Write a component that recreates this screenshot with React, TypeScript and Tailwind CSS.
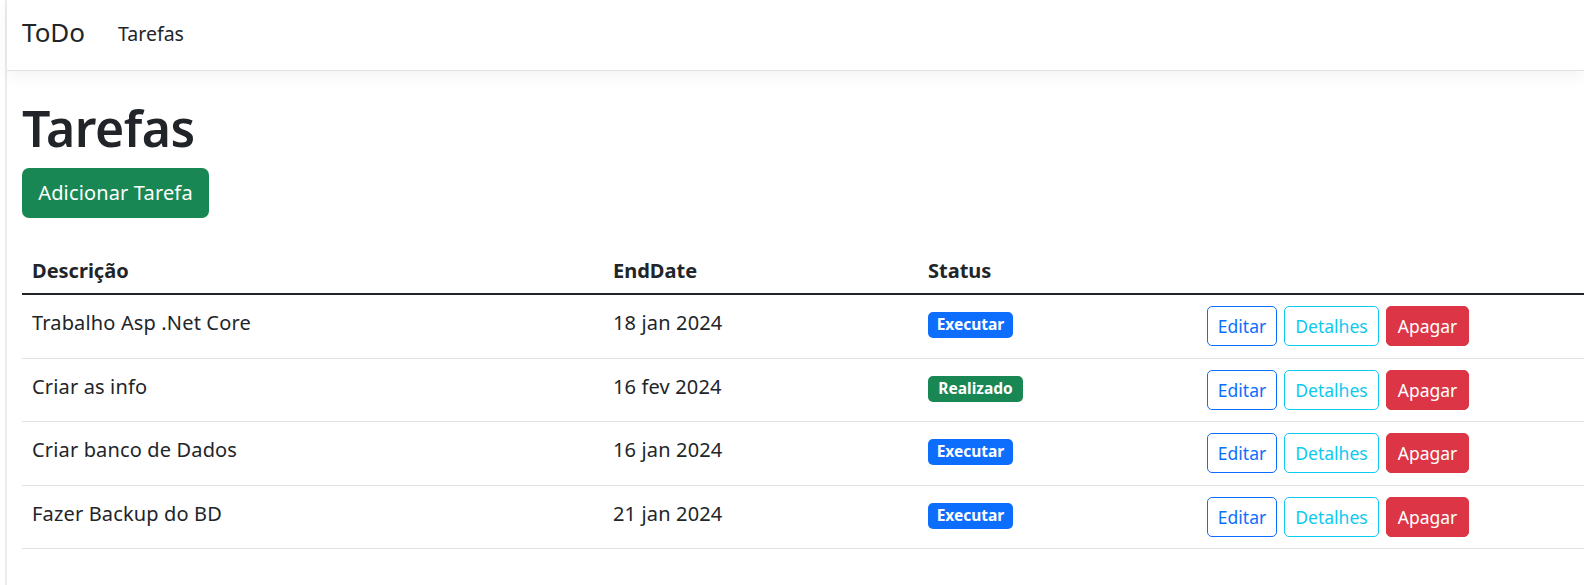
import React from "react";

const rows = [
  { d: "Trabalho Asp .Net Core", e: "18 jan 2024", s: "Executar" },
  { d: "Criar as info", e: "16 fev 2024", s: "Realizado" },
  { d: "Criar banco de Dados", e: "16 jan 2024", s: "Executar" },
  { d: "Fazer Backup do BD", e: "21 jan 2024", s: "Executar" },
];

export default function App() {
  return (
    <div
      className="flex min-h-[585px] w-[1584px] overflow-hidden bg-white text-[#212529]"
      style={{ fontFamily: '"Noto Sans", "Open Sans", sans-serif' }}
    >
      <div className="w-[5px] shrink-0 bg-white" />
      <div className="w-[2px] shrink-0 bg-[#ececec]" />
      <div className="flex min-w-0 flex-1 flex-col">
        <nav className="relative z-10 flex h-[71px] items-center border-b border-[#dee2e6] bg-white pl-[15px] shadow-[0_5px_15px_rgba(0,0,0,0.05)]">
          <span className="mb-[5px] mr-[23px] text-[26px] leading-[37px]">ToDo</span>
          <span className="mb-[2px] px-[10px] text-[19.5px] leading-[30px]">Tarefas</span>
        </nav>
        <main className="flex flex-col pl-[15px] pt-[27px]">
          <h1 className="text-[50px] font-semibold leading-[60px] tracking-[-0.5px]">Tarefas</h1>
          <div className="mt-[10px] flex h-[50px] w-[187px] items-center justify-center rounded-[7px] bg-[#198754] text-[20px] tracking-[0.15px] text-white">
            Adicionar Tarefa
          </div>
          <div className="mt-[25px] w-full">
            <div className="grid h-[52px] grid-cols-[581px_315px_279px_1fr] border-b-2 border-[#212529] text-[20px] font-bold leading-[30px]">
              <div className="px-[10px] pt-[13px]">Descrição</div>
              <div className="px-[10px] pt-[13px]">EndDate</div>
              <div className="px-[10px] pt-[13px]">Status</div>
              <div className="px-[10px] pt-[13px]" />
            </div>
            {rows.map((r, i) => (
              <div
                key={i}
                className="grid h-[63.5px] grid-cols-[581px_315px_279px_1fr] border-b border-[#dee2e6] text-[20px] leading-[30px] tracking-[0.15px]"
              >
                <div className="px-[10px] pt-[13px]">{r.d}</div>
                <div className="px-[10px] pt-[13px]">{r.e}</div>
                <div className="flex items-start px-[10px] pt-[17px]">
                  <span
                    className={`flex h-[26px] items-center justify-center rounded-[5px] text-[15.5px] font-bold leading-none tracking-normal text-white ${
                      r.s === "Realizado" ? "w-[95px] bg-[#198754]" : "w-[85px] bg-[#0d6efd]"
                    }`}
                  >
                    {r.s}
                  </span>
                </div>
                <div className="flex items-start gap-[7px] px-[10px] pt-[11px] tracking-normal">
                  <span className="flex h-[40px] w-[70px] items-center justify-center rounded-[5px] border border-[#0d6efd] text-[17.5px] text-[#0d6efd]">
                    Editar
                  </span>
                  <span className="flex h-[40px] w-[95px] items-center justify-center rounded-[5px] border border-[#0dcaf0] text-[17.5px] text-[#0dcaf0]">
                    Detalhes
                  </span>
                  <span className="flex h-[40px] w-[83px] items-center justify-center rounded-[5px] border border-[#dc3545] bg-[#dc3545] text-[17.5px] text-white">
                    Apagar
                  </span>
                </div>
              </div>
            ))}
          </div>
        </main>
      </div>
    </div>
  );
}
